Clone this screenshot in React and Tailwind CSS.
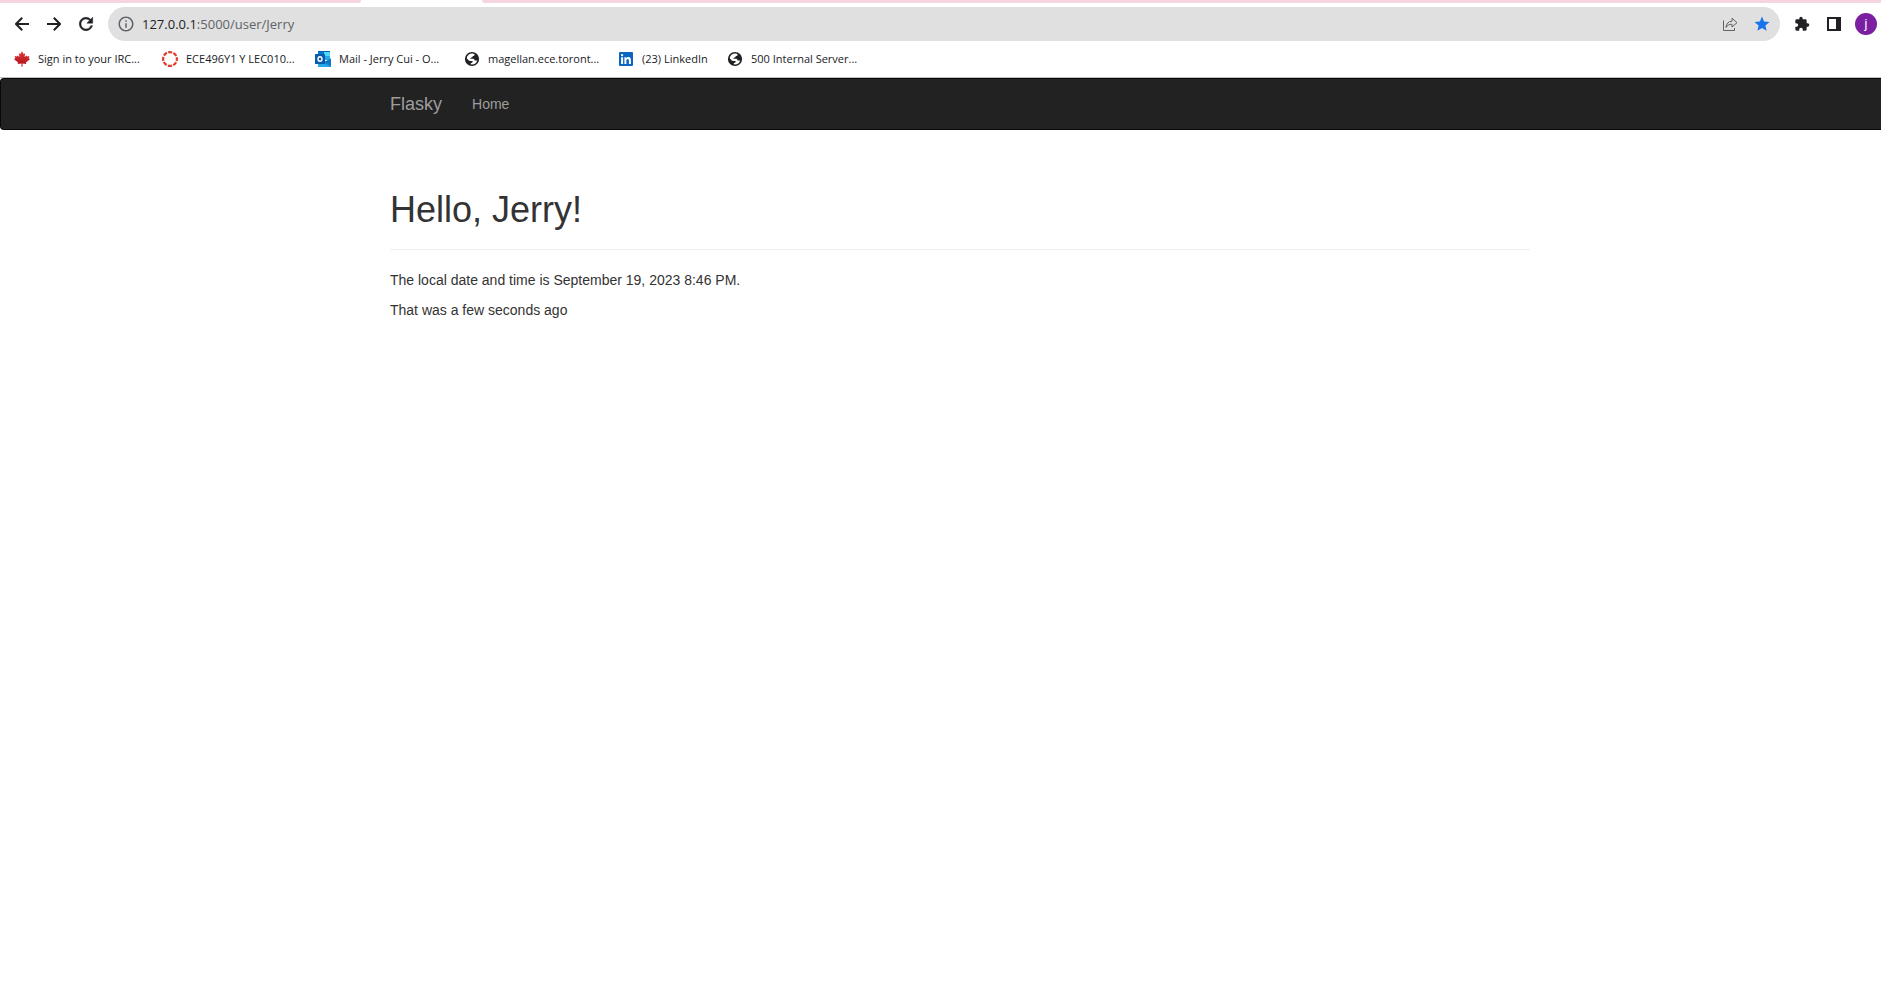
import React from "react";
import { MdInfoOutline, MdStar, MdExtension } from "react-icons/md";

function Arrow({ path }) {
  return (
    <svg viewBox="0 0 14 14" className="size-[14px]" fill="none" stroke="currentColor" strokeWidth="2" aria-hidden="true">
      <path d={path} />
    </svg>
  );
}

function Reload() {
  return (
    <svg viewBox="0 0 24 24" className="size-5" fill="currentColor" stroke="currentColor" strokeWidth="0.6" aria-hidden="true">
      <path d="M17.65 6.35A7.958 7.958 0 0 0 12 4c-4.42 0-7.99 3.58-7.99 8s3.57 8 7.99 8c3.73 0 6.84-2.55 7.73-6h-2.08A5.99 5.99 0 0 1 12 18c-3.31 0-6-2.69-6-6s2.69-6 6-6c1.66 0 3.14.69 4.22 1.78L13 11h7V4l-2.35 2.35z" />
    </svg>
  );
}

function Globe() {
  return (
    <svg viewBox="0 0 16 16" className="size-4 shrink-0" aria-hidden="true">
      <circle cx="8" cy="8" r="7.1" fill="#202124" />
      <path
        d="M8.4 2.6C9.4 2.7 10.2 3 10.7 3.4C10.6 4.6 9.6 4.9 8.7 5C8.7 6.2 8.2 6.5 7 6.6C6.8 7.2 6.6 7.6 5.8 7.8H9.2C10.2 7.9 10.4 8.6 10.5 9.4H13.2C12.6 11.8 10.6 13.4 8 13.4L6.8 13.2V12C8 11.9 8.7 11.3 8.7 9.9H6.2C4.8 9.8 4.2 8.8 2.7 7.2C3.1 4.5 5.5 2.5 8.4 2.6Z"
        fill="#fff"
      />
    </svg>
  );
}

function Ring() {
  return (
    <svg viewBox="0 0 16 16" className="size-4 shrink-0" aria-hidden="true">
      <circle cx="8" cy="8" r="6.9" fill="none" stroke="#e13b2e" strokeWidth="2.2" strokeDasharray="4.1 1.319" strokeDashoffset="2.05" />
    </svg>
  );
}

function Maple() {
  return (
    <svg viewBox="0 0 16 16" className="size-4 shrink-0" aria-hidden="true">
      <defs>
        <linearGradient id="leaf" x1="0" y1="0" x2="0" y2="1">
          <stop offset="0" stopColor="#e0393c" />
          <stop offset="1" stopColor="#a80f14" />
        </linearGradient>
      </defs>
      <path
        d="M8 0.2L9.6 3L11.2 2.2L10.6 6L12.6 4.4L13.1 5.4L15.4 5L14.7 7.3L16 8.2L11.9 11.5L12.3 13L8.5 12.5V15.8H7.5V12.5L3.7 13L4.1 11.5L0 8.2L1.3 7.3L0.6 5L2.9 5.4L3.4 4.4L5.4 6L4.8 2.2L6.4 3Z"
        fill="url(#leaf)"
      />
    </svg>
  );
}

function Outlook() {
  return (
    <svg viewBox="0 0 16 16" className="size-4 shrink-0" aria-hidden="true">
      <path d="M3 0H15V8H3Z" fill="#0078d4" />
      <path d="M3 0H15V1H3Z" fill="#0364b8" />
      <path d="M9 1H15V5H9Z" fill="#50d9ff" />
      <path d="M9 5H15V9H9Z" fill="#28a8ea" />
      <path d="M3 8L9 11L16 7.5V16H3Z" fill="#1490df" />
      <path d="M16 7.5V15L9.5 11Z" fill="#0f78c8" />
      <path d="M3 12.5H9.5L15.5 16H3Z" fill="#28a8ea" />
      <rect y="3" width="10" height="10" rx="0.6" fill="#0a5cab" />
      <ellipse cx="5" cy="8" rx="2" ry="2.2" fill="none" stroke="#fff" strokeWidth="1.4" />
    </svg>
  );
}

function LinkedIn() {
  return (
    <svg viewBox="0 0 16 16" className="size-4 shrink-0" aria-hidden="true">
      <rect x="1" y="1" width="14" height="14" rx="1" fill="#0a66c2" />
      <path
        d="M3.1 6.3H5.1V12.9H3.1ZM4.1 3A1.15 1.15 0 1 1 4.1 5.3A1.15 1.15 0 0 1 4.1 3ZM6.4 6.3H8.3V7.2C8.7 6.5 9.4 6.1 10.4 6.1C12.4 6.1 12.9 7.4 12.9 9.3V12.9H10.9V9.7C10.9 8.8 10.8 7.9 9.7 7.9C8.7 7.9 8.4 8.7 8.4 9.6V12.9H6.4Z"
        fill="#fff"
      />
    </svg>
  );
}

const bookmarks = [
  { icon: Maple, label: "Sign in to your IRC...", width: "w-[148px]" },
  { icon: Ring, label: "ECE496Y1 Y LEC010...", width: "w-[153px]" },
  { icon: Outlook, label: "Mail - Jerry Cui - O...", width: "w-[149px]" },
  { icon: Globe, label: "magellan.ece.toront...", width: "w-[154px]" },
  { icon: LinkedIn, label: "(23) LinkedIn", width: "w-[109px]" },
  { icon: Globe, label: "500 Internal Server...", width: "w-[148px]" },
];

function IconButton({ label, children }) {
  return (
    <button type="button" aria-label={label} className="flex size-8 shrink-0 items-center justify-center text-[#202124]">
      {children}
    </button>
  );
}

function BrowserChrome() {
  return (
    <header className="border-b border-[#bfbfbf] bg-white font-['Open_Sans','Noto_Sans',sans-serif]">
      <div className="flex h-[3px]">
        <div className="w-[361px] rounded-br-lg bg-[#f6d5e3]" />
        <div className="w-[121px]" />
        <div className="flex-1 rounded-bl-lg bg-[#f6d5e3]" />
      </div>
      <div className="flex items-center pt-1 pr-1 pl-[6px]">
        <div className="flex">
          <IconButton label="Back"><Arrow path="M14 7H1.4M7.2 0.7L1 7L7.2 13.3" /></IconButton>
          <IconButton label="Forward"><Arrow path="M0 7H12.6M6.8 0.7L13 7L6.8 13.3" /></IconButton>
          <IconButton label="Reload"><Reload /></IconButton>
        </div>
        <div className="ml-[6px] flex h-[34px] min-w-0 flex-1 items-center rounded-full bg-[#e0e0e0] pr-[2px] pl-[9px]">
          <MdInfoOutline size={18} className="shrink-0 text-[#5f6368]" />
          <span className="ml-[7px] flex-1 text-[13px] leading-5 whitespace-nowrap text-[#5f6368]">
            <span className="text-[#202124]">127.0.0.1</span>:5000/user/Jerry
          </span>
          <IconButton label="Share">
            <svg viewBox="0 0 16 16" className="size-4" fill="none" stroke="#5f6368" aria-hidden="true">
              <path d="M1.5 4.5V14.5H12.5V12" />
              <path d="M4 11.5C4.3 7.8 6.3 5.4 10 5.2V2.2L15 6.7L10 11V8.2C7.4 8.2 5.4 9.2 4 11.5Z" />
            </svg>
          </IconButton>
          <IconButton label="Edit bookmark"><MdStar size={18} className="text-[#1a73e8]" /></IconButton>
        </div>
        <div className="ml-[6px] flex">
          <IconButton label="Extensions"><MdExtension size={16} /></IconButton>
          <IconButton label="Side panel">
            <svg viewBox="0 0 14 14" className="size-[14px]" aria-hidden="true">
              <path d="M0 0H14V14H0ZM2 2V12H9V2Z" fill="currentColor" fillRule="evenodd" />
            </svg>
          </IconButton>
          <button type="button" aria-label="Profile" className="my-[5px] ml-[5px] flex size-[22px] items-center justify-center rounded-full bg-[#7b1fa2] font-['Roboto',sans-serif] text-xs text-white">
            j
          </button>
        </div>
      </div>
      <nav aria-label="Bookmarks" className="flex h-9 items-center pl-[14px]">
        {bookmarks.map(({ icon: Icon, label, width }) => (
          <a key={label} href="#" className={`flex shrink-0 items-center gap-2 text-[11px] leading-4 whitespace-nowrap text-[#202124] ${width}`}>
            <Icon />
            {label}
          </a>
        ))}
      </nav>
    </header>
  );
}

export default function App() {
  return (
    <div className="min-h-screen bg-white">
      <BrowserChrome />
      <div className="font-['Liberation_Sans',Arial,sans-serif] text-sm leading-5 text-[#333]">
        <nav aria-label="Main" className="rounded-l border border-r-0 border-[#080808] bg-[#222] pl-[374px]">
          <div className="flex max-w-[1170px] text-[#9d9d9d]">
            <a href="#" className="p-[15px] text-lg leading-5">Flasky</a>
            <a href="#" className="p-[15px]">Home</a>
          </div>
        </nav>
        <main className="pl-[375px]">
          <div className="max-w-[1170px] px-[15px]">
            <div className="mt-[60px] mb-5 border-b border-[#eee] pb-[19px]">
              <h1 className="text-4xl leading-10 font-normal">Hello, Jerry!</h1>
            </div>
            <p className="mb-[10px]">The local date and time is September 19, 2023 8:46 PM.</p>
            <p className="mb-[10px]">That was a few seconds ago</p>
          </div>
        </main>
      </div>
    </div>
  );
}
